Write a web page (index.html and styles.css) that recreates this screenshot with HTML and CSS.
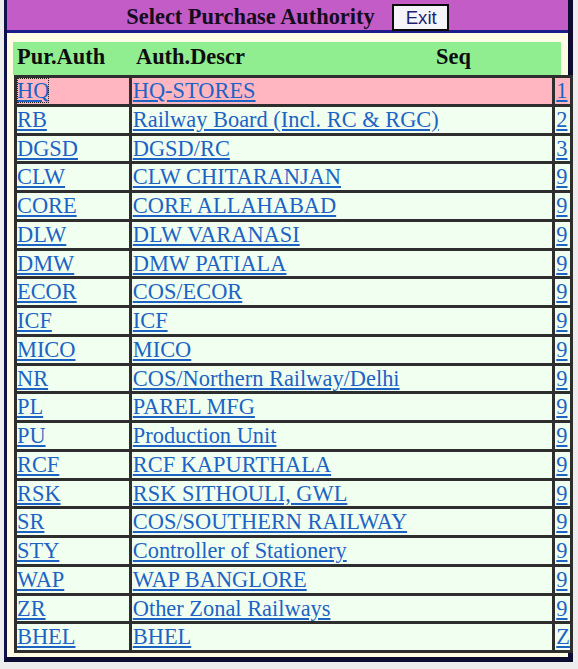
FILE: index.html
```html
<!DOCTYPE html>
<html>
<head>
<meta charset="utf-8">
<title>Select Purchase Authority</title>
<link rel="stylesheet" href="styles.css">
</head>
<body>
<div class="dialog">
  <div class="titlebar">
    <span class="title">Select Purchase Authority</span>
    <button class="exit" type="button">Exit</button>
  </div>
  <div class="content">
    <div class="head">
      <div class="h1">Pur.Auth</div>
      <div class="h2">Auth.Descr</div>
      <div class="h3">Seq</div>
    </div>
    <table class="list">
      <tr class="sel"><td class="c1"><a href="#" class="focus">HQ</a></td><td class="c2"><a href="#">HQ-STORES</a></td><td class="c3"><a href="#">1</a></td></tr>
      <tr><td class="c1"><a href="#">RB</a></td><td class="c2"><a href="#">Railway Board (Incl. RC &amp; RGC)</a></td><td class="c3"><a href="#">2</a></td></tr>
      <tr><td class="c1"><a href="#">DGSD</a></td><td class="c2"><a href="#">DGSD/RC</a></td><td class="c3"><a href="#">3</a></td></tr>
      <tr><td class="c1"><a href="#">CLW</a></td><td class="c2"><a href="#">CLW CHITARANJAN</a></td><td class="c3"><a href="#">9</a></td></tr>
      <tr><td class="c1"><a href="#">CORE</a></td><td class="c2"><a href="#">CORE ALLAHABAD</a></td><td class="c3"><a href="#">9</a></td></tr>
      <tr><td class="c1"><a href="#">DLW</a></td><td class="c2"><a href="#">DLW VARANASI</a></td><td class="c3"><a href="#">9</a></td></tr>
      <tr><td class="c1"><a href="#">DMW</a></td><td class="c2"><a href="#">DMW PATIALA</a></td><td class="c3"><a href="#">9</a></td></tr>
      <tr><td class="c1"><a href="#">ECOR</a></td><td class="c2"><a href="#">COS/ECOR</a></td><td class="c3"><a href="#">9</a></td></tr>
      <tr><td class="c1"><a href="#">ICF</a></td><td class="c2"><a href="#">ICF</a></td><td class="c3"><a href="#">9</a></td></tr>
      <tr><td class="c1"><a href="#">MICO</a></td><td class="c2"><a href="#">MICO</a></td><td class="c3"><a href="#">9</a></td></tr>
      <tr><td class="c1"><a href="#">NR</a></td><td class="c2"><a href="#">COS/Northern Railway/Delhi</a></td><td class="c3"><a href="#">9</a></td></tr>
      <tr><td class="c1"><a href="#">PL</a></td><td class="c2"><a href="#">PAREL MFG</a></td><td class="c3"><a href="#">9</a></td></tr>
      <tr><td class="c1"><a href="#">PU</a></td><td class="c2"><a href="#">Production Unit</a></td><td class="c3"><a href="#">9</a></td></tr>
      <tr><td class="c1"><a href="#">RCF</a></td><td class="c2"><a href="#">RCF KAPURTHALA</a></td><td class="c3"><a href="#">9</a></td></tr>
      <tr><td class="c1"><a href="#">RSK</a></td><td class="c2"><a href="#">RSK SITHOULI, GWL</a></td><td class="c3"><a href="#">9</a></td></tr>
      <tr><td class="c1"><a href="#">SR</a></td><td class="c2"><a href="#">COS/SOUTHERN RAILWAY</a></td><td class="c3"><a href="#">9</a></td></tr>
      <tr><td class="c1"><a href="#">STY</a></td><td class="c2"><a href="#">Controller of Stationery</a></td><td class="c3"><a href="#">9</a></td></tr>
      <tr><td class="c1"><a href="#">WAP</a></td><td class="c2"><a href="#">WAP BANGLORE</a></td><td class="c3"><a href="#">9</a></td></tr>
      <tr><td class="c1"><a href="#">ZR</a></td><td class="c2"><a href="#">Other Zonal Railways</a></td><td class="c3"><a href="#">9</a></td></tr>
      <tr><td class="c1"><a href="#">BHEL</a></td><td class="c2"><a href="#">BHEL</a></td><td class="c3"><a href="#">Z</a></td></tr>
    </table>
  </div>
</div>
</body>
</html>
```
FILE: styles.css
```css
html, body {
  margin: 0;
  padding: 0;
}
body {
  background: #ededed;
  font-family: "Liberation Serif", "Times New Roman", serif;
  font-size: 22.4px;
  width: 578px;
  height: 669px;
  overflow: hidden;
}
.dialog {
  margin-left: 4px;
  width: 561px;
  border-left: 3px solid #10104a;
  border-right: 5px solid #0c0c30;
  border-bottom: 5px solid #0c0c30;
  background: #fffce4;
}
.titlebar {
  height: 30px;
  background: #c45cc8;
  border-bottom: 3px solid #1c1c8a;
  display: flex;
  justify-content: center;
  align-items: flex-start;
  gap: 17px;
}
.title {
  font-weight: bold;
  color: #140c1e;
  line-height: 26px;
  margin-top: 3.5px;
}
.exit {
  margin: 4px 0 0 0;
  width: 57px;
  height: 27px;
  padding: 0 10px 0 12px;
  border: 2px solid #0a0a0a;
  background: #f4f4fa;
  color: #1f1f6e;
  font-family: "Liberation Sans", Arial, sans-serif;
  font-size: 18.67px;
  line-height: 23px;
  text-align: left;
}
.content {
  padding: 9px 7px 4px 6px;
}
.head {
  display: flex;
  background: #90ee90;
  height: 33px;
  font-weight: bold;
  color: #0d0d0d;
  line-height: 29px;
}
.h1 {
  width: 119px;
  padding-left: 4px;
}
.h2 {
  width: 210px;
}
.h3 {
  flex: 1;
  text-align: center;
}
.list {
  width: 559px;
  min-width: 559px;
  margin-left: 1px;
  border-collapse: separate;
  border-spacing: 0;
  border-left: 3px solid #2e2e2e;
  border-top: 3px solid #2e2e2e;
  font-size: 22.4px;
}
.list td {
  padding: 0;
  height: 25.75px;
  line-height: 25.75px;
  border-right: 3px solid #2e2e2e;
  border-bottom: 3px solid #2e2e2e;
  background: #f0fff0;
  white-space: nowrap;
  vertical-align: middle;
}
.list tr.sel td {
  background: #ffb6c1;
}
.c1 { width: 112px; }
.c2 { width: 421px; }
.c3 { width: 14px; }
.c2 a { margin-left: 1px; }
.c3 a { margin-left: 1px; }
.list a {
  color: #1d63c4;
  text-decoration: underline;
}
.list a.focus {
  outline: 1.5px dotted #222;
  outline-offset: -1px;
}
```
